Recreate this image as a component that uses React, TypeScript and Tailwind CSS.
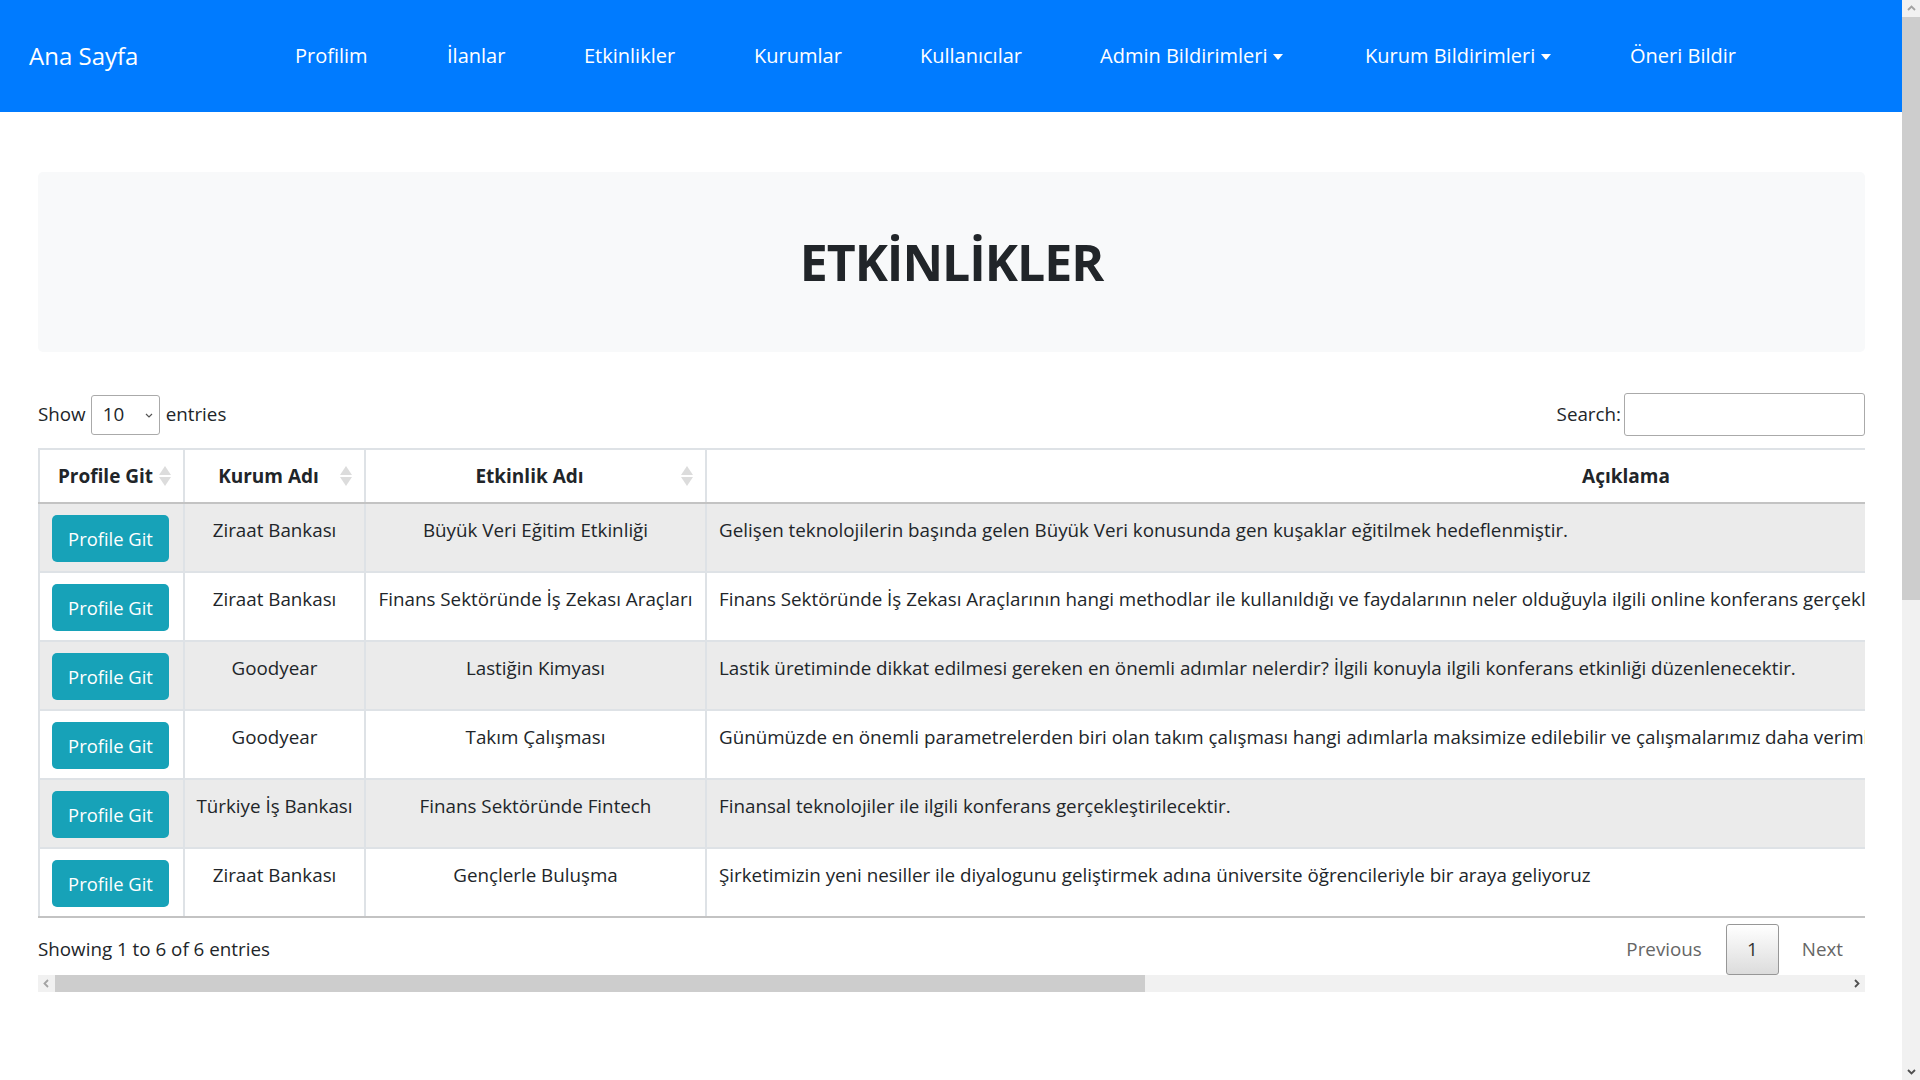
import React from "react";

const navItems: { label: string; w: string; caret?: boolean }[] = [
  { label: "Profilim", w: "w-[152px]" },
  { label: "İlanlar", w: "w-[137px]" },
  { label: "Etkinlikler", w: "w-[170px]" },
  { label: "Kurumlar", w: "w-[166px]" },
  { label: "Kullanıcılar", w: "w-[180px]" },
  { label: "Admin Bildirimleri", w: "w-[265px]", caret: true },
  { label: "Kurum Bildirimleri", w: "w-[265px]", caret: true },
  { label: "Öneri Bildir", w: "w-[200px]" },
];

const rows = [
  {
    kurum: "Ziraat Bankası",
    ad: "Büyük Veri Eğitim Etkinliği",
    aciklama:
      "Gelişen teknolojilerin başında gelen Büyük Veri konusunda gen kuşaklar eğitilmek hedeflenmiştir.",
  },
  {
    kurum: "Ziraat Bankası",
    ad: "Finans Sektöründe İş Zekası Araçları",
    aciklama:
      "Finans Sektöründe İş Zekası Araçlarının hangi methodlar ile kullanıldığı ve faydalarının neler olduğuyla ilgili online konferans gerçekleştirilecektir.",
  },
  {
    kurum: "Goodyear",
    ad: "Lastiğin Kimyası",
    aciklama:
      "Lastik üretiminde dikkat edilmesi gereken en önemli adımlar nelerdir? İlgili konuyla ilgili konferans etkinliği düzenlenecektir.",
  },
  {
    kurum: "Goodyear",
    ad: "Takım Çalışması",
    aciklama:
      "Günümüzde en önemli parametrelerden biri olan takım çalışması hangi adımlarla maksimize edilebilir ve çalışmalarımız daha verimli hale getirilebilir?",
  },
  {
    kurum: "Türkiye İş Bankası",
    ad: "Finans Sektöründe Fintech",
    aciklama: "Finansal teknolojiler ile ilgili konferans gerçekleştirilecektir.",
  },
  {
    kurum: "Ziraat Bankası",
    ad: "Gençlerle Buluşma",
    aciklama:
      "Şirketimizin yeni nesiller ile diyalogunu geliştirmek adına üniversite öğrencileriyle bir araya geliyoruz",
  },
];

function SortIcon() {
  return (
    <svg width="12" height="20" viewBox="0 0 12 20" className="shrink-0">
      <polygon points="6,0 12,9 0,9" fill="#dcdcdc" />
      <polygon points="0,11 12,11 6,20" fill="#dcdcdc" />
    </svg>
  );
}

function Caret() {
  return (
    <svg width="10" height="6" viewBox="0 0 10 6" className="ml-[6px] mt-[2px]">
      <polygon points="0,0 10,0 5,6" fill="#ffffff" />
    </svg>
  );
}

function Chevron({ dir, color }: { dir: "up" | "down" | "left" | "right"; color: string }) {
  const pts: Record<string, string> = {
    up: "1,6 4.5,2.5 8,6",
    down: "1,3 4.5,6.5 8,3",
    left: "6,1 2.5,4.5 6,8",
    right: "3,1 6.5,4.5 3,8",
  };
  return (
    <svg width="9" height="9" viewBox="0 0 9 9">
      <polyline points={pts[dir]} fill="none" stroke={color} strokeWidth="1.8" />
    </svg>
  );
}

export default function App() {
  return (
    <div className="flex h-[1080px] overflow-hidden bg-white font-['Open_Sans',sans-serif] text-[#212529]">
      <div className="min-w-0 flex-1">
        {/* Navbar */}
        <nav className="flex h-[112px] items-center bg-[#007bff] text-white">
          <div className="ml-[29px] w-[266px] text-[24px]">Ana Sayfa</div>
          <div className="flex items-center text-[20px]">
            {navItems.map((n) => (
              <div key={n.label} className={`${n.w} flex shrink-0 items-center`}>
                <span className="whitespace-nowrap">{n.label}</span>
                {n.caret && <Caret />}
              </div>
            ))}
          </div>
        </nav>

        {/* Jumbotron */}
        <div className="ml-[38px] mt-[60px] flex h-[180px] w-[1827px] items-center justify-center rounded-[5px] bg-[#f8f9fa]">
          <h1 className="text-[50px] font-bold leading-none tracking-[-1px] text-[#212529]">ETKİNLİKLER</h1>
        </div>

        {/* DataTable wrapper */}
        <div className="ml-[38px] mt-[41px] w-[1827px] overflow-hidden text-[18.8px]">
          <div className="flex h-[43px] w-[1827px] items-center justify-between">
            <div className="flex items-center">
              <span>Show</span>
              <div className="relative ml-[5px] mr-[6px] flex h-[40px] w-[69px] items-center rounded-[3px] border border-[#aaaaaa] bg-white pl-[11px]">
                <span>10</span>
                <svg width="8" height="5" viewBox="0 0 8 5" className="absolute right-[6px] top-[17px]">
                  <polyline points="1,1 4,4 7,1" fill="none" stroke="#555" strokeWidth="1.2" />
                </svg>
              </div>
              <span>entries</span>
            </div>
            <div className="flex items-center">
              <span className="mr-[3px]">Search:</span>
              <div className="h-[43px] w-[241px] rounded-[3px] border border-[#aaaaaa] bg-white" />
            </div>
          </div>

          <table className="mt-[12px] w-[2967px] table-fixed border-collapse leading-[26px]">
            <colgroup>
              <col className="w-[145px]" />
              <col className="w-[181px]" />
              <col className="w-[341px]" />
              <col className="w-[2300px]" />
            </colgroup>
            <thead>
              <tr>
                {["Profile Git", "Kurum Adı", "Etkinlik Adı"].map((h) => (
                  <th
                    key={h}
                    className="border-2 border-[#dee2e6] border-b-[#c3c3c3] py-[13px] pl-[12px] pr-[12px] text-[19px] font-bold"
                  >
                    <div className="flex items-center">
                      <span className="flex-1 text-center whitespace-nowrap">{h}</span>
                      <SortIcon />
                    </div>
                  </th>
                ))}
                <th className="border-2 border-r-0 border-[#dee2e6] border-b-[#c3c3c3] px-[14px] py-[13px] text-[19px] font-bold">
                  <div className="w-[1810px] text-center">Açıklama</div>
                </th>
              </tr>
            </thead>
            <tbody>
              {rows.map((r, i) => {
                const last = i === rows.length - 1;
                const bg = i % 2 === 0 ? "bg-[#ebebeb]" : "bg-white";
                const bb = last ? "border-b-[#c3c3c3]" : "";
                return (
                  <tr key={i} className={bg}>
                    <td className={`border-2 border-[#dee2e6] ${bb} pb-[9px] pl-[12px] pt-[11px] align-top`}>
                      <button className="flex h-[47px] w-[117px] items-center justify-center rounded-[5px] bg-[#17a2b8] text-[18.4px] text-white">
                        Profile Git
                      </button>
                    </td>
                    <td className={`border-2 border-[#dee2e6] ${bb} px-[8px] pt-[13px] text-center align-top whitespace-nowrap`}>
                      {r.kurum}
                    </td>
                    <td className={`border-2 border-[#dee2e6] ${bb} px-[8px] pt-[13px] text-center align-top whitespace-nowrap`}>
                      {r.ad}
                    </td>
                    <td className={`border-2 border-r-0 border-[#dee2e6] ${bb} px-[12px] pt-[13px] align-top whitespace-nowrap`}>
                      {r.aciklama}
                    </td>
                  </tr>
                );
              })}
            </tbody>
          </table>

          <div className="mt-[6px] flex h-[51px] w-[1827px] items-center justify-between">
            <span>Showing 1 to 6 of 6 entries</span>
            <div className="flex items-center text-[#666666]">
              <span className="mr-[24px]">Previous</span>
              <div className="flex h-[51px] w-[53px] items-center justify-center rounded-[3px] border border-[#979797] bg-gradient-to-b from-white to-[#dcdcdc] text-[#333333]">
                1
              </div>
              <span className="ml-[23px] mr-[22px]">Next</span>
            </div>
          </div>

          {/* horizontal scrollbar */}
          <div className="flex h-[17px] w-[1827px] bg-[#f1f1f1]">
            <div className="flex w-[17px] items-center justify-center">
              <Chevron dir="left" color="#a3a3a3" />
            </div>
            <div className="w-[1090px] bg-[#cdcdcd]" />
            <div className="flex-1" />
            <div className="flex w-[17px] items-center justify-center">
              <Chevron dir="right" color="#505050" />
            </div>
          </div>
        </div>
      </div>

      {/* vertical scrollbar */}
      <div className="flex w-[18px] shrink-0 flex-col bg-[#f1f1f1]">
        <div className="flex h-[17px] items-center justify-center">
          <Chevron dir="up" color="#a3a3a3" />
        </div>
        <div className="h-[583px] bg-[#cdcdcd]" />
        <div className="flex-1" />
        <div className="flex h-[17px] items-center justify-center">
          <Chevron dir="down" color="#505050" />
        </div>
      </div>
    </div>
  );
}
